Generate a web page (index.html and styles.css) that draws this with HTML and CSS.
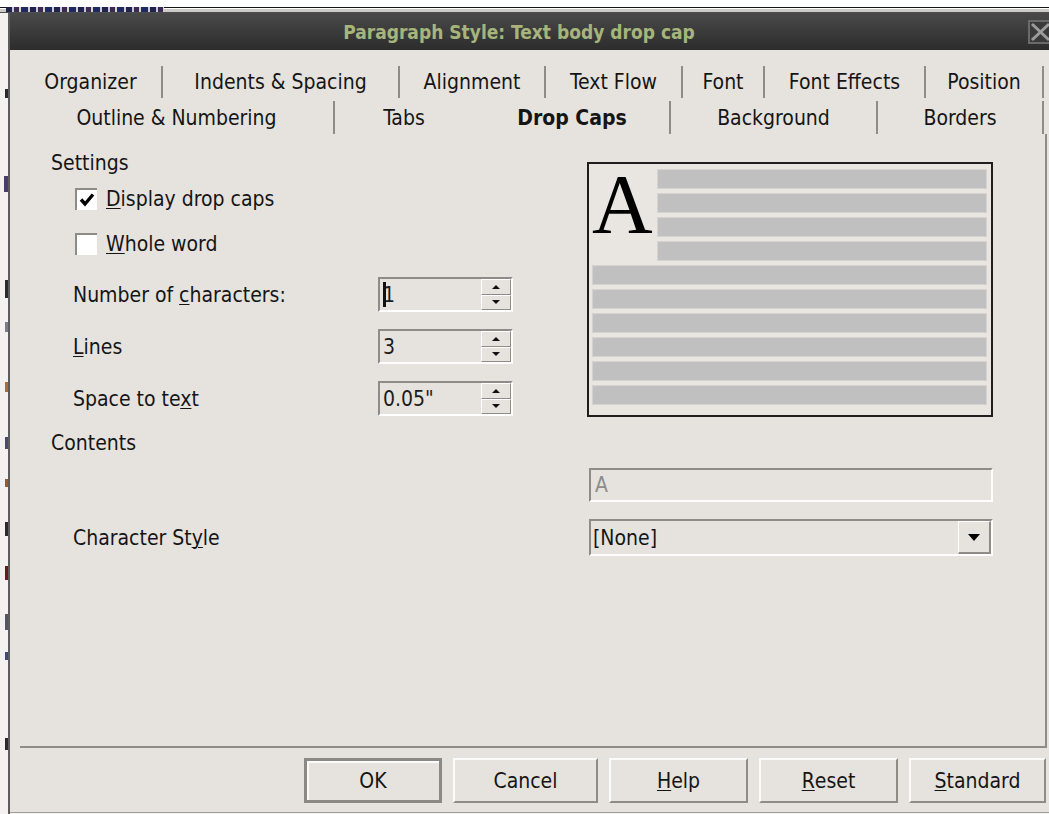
FILE: index.html
```html
<!DOCTYPE html>
<html lang="en">
<head>
<meta charset="utf-8">
<title>Paragraph Style: Text body drop cap</title>
<link rel="stylesheet" href="styles.css">
</head>
<body>
<div class="screen">
  <div class="backdrop-top"></div>
  <div class="frame-top"></div>
  <div class="peek"></div>
  <div class="main">
    <div class="doc-edge">
      <i class="bit b1"></i><i class="bit b2"></i><i class="bit b3"></i><i class="bit b4"></i>
      <i class="bit b5"></i><i class="bit b6"></i><i class="bit b7"></i><i class="bit b8"></i>
      <i class="bit b9"></i><i class="bit b10"></i><i class="bit b11"></i><i class="bit b12"></i>
    </div>
    <div class="dialog">
      <div class="titlebar">
        <span class="title-spacer"></span>
        <span class="title">Paragraph Style: Text body drop cap</span>
        <span class="title-spacer"></span>
        <span class="close">
          <svg width="21" height="20" viewBox="0 0 21 20"><path d="M4 2 L21 18 M21 2 L4 18" stroke="#9c9c9c" stroke-width="3" fill="none"/></svg>
        </span>
      </div>
      <div class="body">
        <div class="tabs">
          <div class="tabrow row1">
            <div class="tab">Organizer</div>
            <div class="tab">Indents &amp; Spacing</div>
            <div class="tab">Alignment</div>
            <div class="tab">Text Flow</div>
            <div class="tab">Font</div>
            <div class="tab">Font Effects</div>
            <div class="tab">Position</div>
          </div>
          <div class="tabrow row2">
            <div class="tab">Outline &amp; Numbering</div>
            <div class="tab before-active">Tabs</div>
            <div class="tab active">Drop Caps</div>
            <div class="tab">Background</div>
            <div class="tab">Borders</div>
          </div>
        </div>

        <div class="page">
          <div class="settings">
            <div class="settings-left">
              <div class="group-title">Settings</div>
              <div class="check first">
                <span class="box">
                  <svg width="18" height="18" viewBox="0 0 18 18"><path d="M3 8.5 L7 13 L15 3.5" stroke="#000" stroke-width="3.4" fill="none"/></svg>
                </span>
                <span><u>D</u>isplay drop caps</span>
              </div>
              <div class="check second">
                <span class="box"></span>
                <span><u>W</u>hole word</span>
              </div>
              <div class="spin-row first">
                <span class="lbl">Number of <u>c</u>haracters:</span>
                <div class="spin">
                  <span class="spin-val"><i class="caret"></i>1</span>
                  <span class="spin-btns"><span class="sb"><i class="up"></i></span><span class="sb"><i class="down"></i></span></span>
                </div>
              </div>
              <div class="spin-row">
                <span class="lbl"><u>L</u>ines</span>
                <div class="spin">
                  <span class="spin-val">3</span>
                  <span class="spin-btns"><span class="sb"><i class="up"></i></span><span class="sb"><i class="down"></i></span></span>
                </div>
              </div>
              <div class="spin-row">
                <span class="lbl">Space to te<u>x</u>t</span>
                <div class="spin">
                  <span class="spin-val">0.05"</span>
                  <span class="spin-btns"><span class="sb"><i class="up"></i></span><span class="sb"><i class="down"></i></span></span>
                </div>
              </div>
            </div>

            <div class="preview">
              <span class="dropcap">A</span>
              <i class="bar"></i><i class="bar"></i><i class="bar"></i><i class="bar"></i>
              <i class="bar full"></i><i class="bar full"></i><i class="bar full"></i>
              <i class="bar full"></i><i class="bar full"></i><i class="bar full"></i>
            </div>
          </div>

          <div class="group-title contents-title">Contents</div>
          <div class="form-row content-row">
            <span></span>
            <div class="field">A</div>
          </div>
          <div class="form-row style-row">
            <span class="lbl">Character St<u>y</u>le</span>
            <div class="combo">
              <span class="combo-val">[None]</span>
              <span class="combo-btn"><i class="combo-arrow"></i></span>
            </div>
          </div>
        </div>

        <div class="buttons">
          <span class="btn default w-ok">OK</span>
          <span class="btn w-cancel">Cancel</span>
          <span class="btn w-help"><u>H</u>elp</span>
          <span class="btn w-reset"><u>R</u>eset</span>
          <span class="btn w-standard"><u>S</u>tandard</span>
        </div>
      </div>
      <div class="bottom-line"></div>
    </div>
  </div>
</div>
</body>
</html>
```

FILE: styles.css
```css
* { box-sizing: border-box; }

html, body { margin: 0; padding: 0; }

body {
  width: 1049px;
  height: 814px;
  overflow: hidden;
  background: #ffffff;
  font-family: "DejaVu Sans Condensed", "DejaVu Sans", sans-serif;
  font-stretch: condensed;
  font-size: 21px;
  color: #151515;
}

i { display: block; font-style: normal; }

u {
  text-decoration-thickness: 1px;
  text-underline-offset: 2px;
}

.screen {
  position: relative;
  width: 1049px;
  height: 814px;
  display: flex;
  flex-direction: column;
}

/* strip of the window behind, above the dialog frame */
.backdrop-top { height: 7px; flex: none; }

.frame-top {
  height: 6px;
  flex: none;
  border-top: 1px solid #151515;
  background: linear-gradient(#ffffff 0 1px, #cdcbc8 1px 4px, #4e4e4e 4px);
}

/* sliver of the document window's text row showing over the frame */
.peek {
  position: absolute;
  left: 6px;
  top: 7px;
  width: 158px;
  height: 5px;
  background:
    repeating-linear-gradient(90deg,
      #23234f 0 6px, #c8c6d8 6px 8px,
      #3a2a55 8px 13px, #d8d4cc 13px 15px,
      #1f2a60 15px 22px, #cfcbd6 22px 24px);
}

.main { flex: 1; display: flex; min-height: 0; }

.doc-edge {
  width: 8px;
  flex: none;
  background: #f3f2f0;
  display: flex;
  flex-direction: column;
  align-items: flex-end;
}
.bit { width: 3px; background: #2b2b2b; }
.b1 { margin-top: 76px; height: 9px; }
.b2 { margin-top: 78px; height: 16px; width: 4px; background: #4b3c6c; }
.b3 { margin-top: 88px; height: 18px; }
.b4 { margin-top: 24px; height: 10px; background: #7a7a8a; }
.b5 { margin-top: 50px; height: 10px; background: #b36a2a; }
.b6 { margin-top: 45px; height: 12px; background: #4a4a6a; }
.b7 { margin-top: 30px; height: 8px; background: #9a5a2a; }
.b8 { margin-top: 35px; height: 14px; }
.b9 { margin-top: 30px; height: 14px; background: #6a1a1a; }
.b10 { margin-top: 34px; height: 16px; background: #555566; }
.b11 { margin-top: 22px; height: 8px; background: #3a4a7a; }
.b12 { margin-top: 78px; height: 12px; }

.dialog {
  flex: 1;
  display: flex;
  flex-direction: column;
  border-left: 2px solid #5c5c5c;
  background: #e6e3de;
}

/* title bar */
.titlebar {
  height: 37px;
  flex: none;
  display: flex;
  align-items: center;
  background: linear-gradient(#4a4a4a, #2c2c2c);
}
.title-spacer { flex: 1; }
.title {
  font-weight: bold;
  font-size: 19px;
  color: #a6b57b;
  white-space: nowrap;
  padding-top: 1px;
}
.close {
  width: 21px;
  height: 24px;
  margin-top: 1px;
  border: 2px solid #6a6a6a;
  border-right: none;
  background: #3a3a3a;
  display: flex;
  align-items: center;
  overflow: hidden;
}
.close svg { display: block; margin-left: -2px; }

/* dialog body */
.body {
  flex: 1;
  display: flex;
  flex-direction: column;
  padding: 16px 0 0 10px;
}

.tabs { display: flex; flex-direction: column; gap: 3px; }
.tabrow { display: grid; height: 32px; }
.row1 { grid-template-columns: 143px 237px 146px 137px 82px 161px 118px; }
.row2 { grid-template-columns: 315px 140px 196px 207px 166px; height: 33px; }
.tab {
  display: flex;
  align-items: center;
  justify-content: center;
  border-right: 2px solid #8f8c88;
  white-space: nowrap;
}
.tab.before-active { border-right-color: transparent; }
.tab.active { font-weight: bold; }

/* tab page */
.page {
  height: 614px;
  width: 1027px;
  flex: none;
  border-right: 2px solid #8f8c88;
  border-bottom: 2px solid #8f8c88;
  padding: 17px 0 0 31px;
}

.settings { display: flex; }
.settings-left { width: 536px; display: flex; flex-direction: column; }

.group-title { height: 24px; line-height: 24px; }

.check {
  display: flex;
  align-items: center;
  height: 24px;
  padding-left: 24px;
  gap: 9px;
}
.check.first { margin-top: 12px; }
.check.second { margin-top: 21px; }
.box {
  width: 22px;
  height: 22px;
  background: #ffffff;
  border-top: 2px solid #8f8c88;
  border-left: 2px solid #8f8c88;
  display: flex;
  align-items: center;
  justify-content: center;
}
.box svg { display: block; }

.spin-row {
  display: flex;
  align-items: center;
  padding-left: 22px;
  height: 35px;
  margin-top: 17px;
}
.spin-row.first { margin-top: 21px; }
.lbl { width: 305px; white-space: nowrap; }

.spin {
  width: 135px;
  height: 35px;
  display: flex;
  border-top: 2px solid #8f8c88;
  border-left: 2px solid #8f8c88;
  border-bottom: 2px solid #ffffff;
  border-right: 2px solid #ffffff;
}
.spin-val {
  flex: 1;
  display: flex;
  align-items: center;
  padding-left: 3px;
  color: #1c1c1c;
}
.caret {
  width: 3px;
  height: 25px;
  background: #111111;
  margin-right: -3px;
  position: relative;
}
.spin-btns { width: 30px; display: flex; flex-direction: column; }
.sb {
  flex: 1;
  display: flex;
  align-items: center;
  justify-content: center;
  border-top: 1px solid #ffffff;
  border-left: 1px solid #ffffff;
  border-right: 1px solid #8f8c88;
  border-bottom: 1px solid #8f8c88;
}
.up {
  width: 0; height: 0;
  border-left: 4px solid transparent;
  border-right: 4px solid transparent;
  border-bottom: 4px solid #111;
}
.down {
  width: 0; height: 0;
  border-left: 4px solid transparent;
  border-right: 4px solid transparent;
  border-top: 4px solid #111;
}

/* drop cap preview */
.preview {
  margin-top: 11px;
  width: 406px;
  height: 255px;
  border: 2px solid #1e1e1e;
  padding: 5px 4px 0 3px;
  display: grid;
  grid-template-columns: 65px 330px;
  grid-template-rows: repeat(10, 20px);
  row-gap: 4px;
  background: #e9e6e1;
}
.dropcap {
  grid-column: 1;
  grid-row: 1 / span 4;
  font-family: "Liberation Serif", serif;
  font-size: 84px;
  line-height: 1;
  margin-top: -6px;
  color: #000;
}
.bar { background: #c0c0c0; border: 1px solid #d5d3d0; }
.bar.full { grid-column: 1 / span 2; }

/* contents */
.contents-title { margin-top: 14px; }
.form-row {
  display: grid;
  grid-template-columns: 538px 404px;
  align-items: center;
}
.content-row { margin-top: 13px; height: 34px; }
.style-row { margin-top: 17px; height: 37px; }
.style-row .lbl { padding-left: 22px; }

.field {
  height: 34px;
  display: flex;
  align-items: center;
  padding-left: 4px;
  color: #8c8c8c;
  border-top: 2px solid #8f8c88;
  border-left: 2px solid #8f8c88;
  border-bottom: 2px solid #ffffff;
  border-right: 2px solid #ffffff;
}

.combo {
  height: 37px;
  display: flex;
  border-top: 2px solid #8f8c88;
  border-left: 2px solid #8f8c88;
  border-bottom: 2px solid #ffffff;
  border-right: 2px solid #ffffff;
}
.combo-val {
  flex: 1;
  display: flex;
  align-items: center;
  padding-left: 2px;
  color: #151515;
}
.combo-btn {
  width: 33px;
  display: flex;
  align-items: center;
  justify-content: center;
  border-top: 1px solid #ffffff;
  border-left: 1px solid #ffffff;
  border-right: 2px solid #8f8c88;
  border-bottom: 2px solid #8f8c88;
}
.combo-arrow {
  width: 0; height: 0;
  border-left: 6px solid transparent;
  border-right: 6px solid transparent;
  border-top: 7px solid #000;
}

/* button row */
.buttons {
  display: flex;
  justify-content: flex-end;
  gap: 11px;
  margin-top: 10px;
  height: 45px;
  padding-right: 3px;
}
.btn {
  display: flex;
  align-items: center;
  justify-content: center;
  background: #e6e3de;
  border-top: 2px solid #fbfbfa;
  border-left: 2px solid #fbfbfa;
  border-right: 2px solid #8f8c88;
  border-bottom: 2px solid #8f8c88;
}
.btn.default {
  border: 3px solid #8c8985;
  box-shadow: inset 2px 2px 0 #fbfbfa;
}
.w-ok { width: 138px; }
.w-cancel { width: 145px; }
.w-help { width: 139px; }
.w-reset { width: 139px; }
.w-standard { width: 137px; }

.bottom-line {
  height: 2px;
  flex: none;
  margin-top: 9px;
  border-top: 1px solid #a19e9a;
  background: #f3f2f0;
}
```
